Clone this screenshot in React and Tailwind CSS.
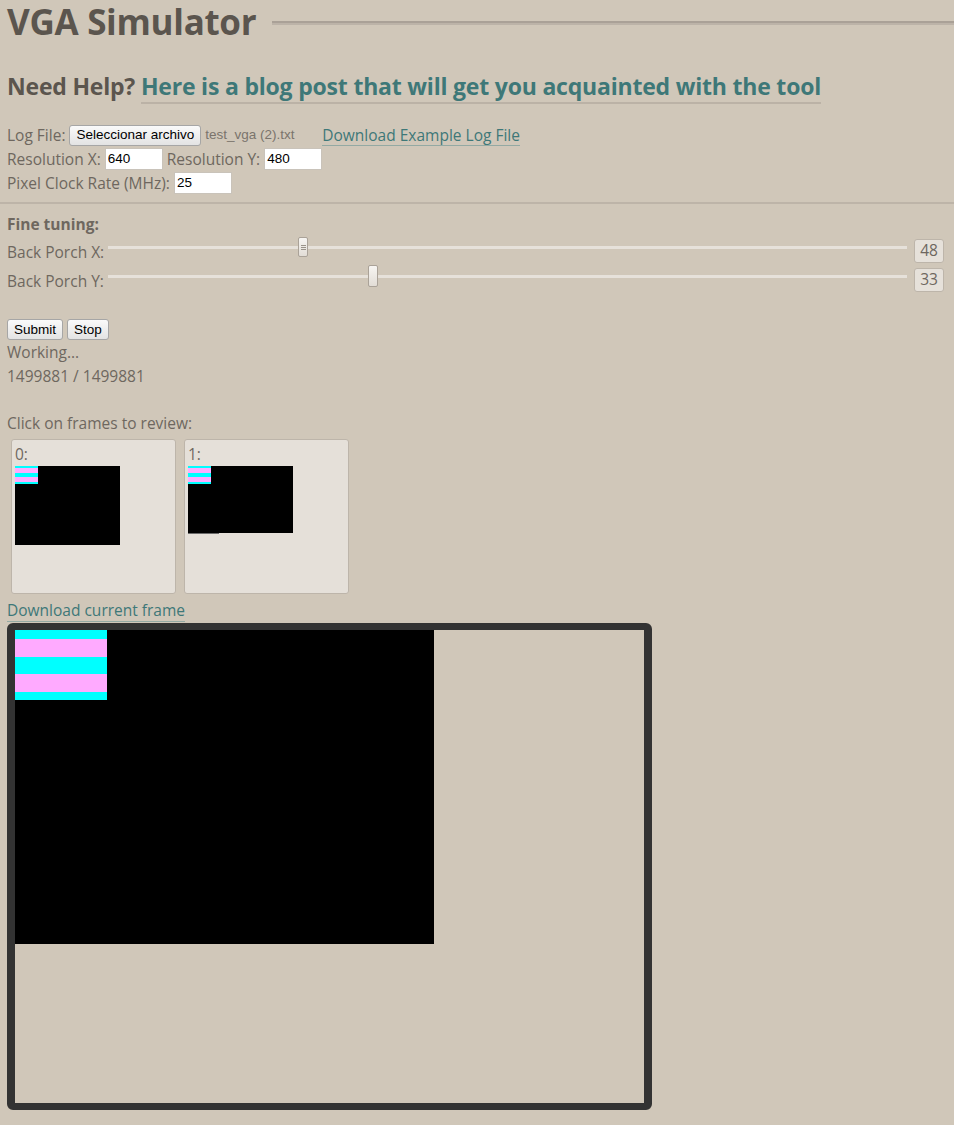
import { useState } from 'react';

const bodyFont = { fontFamily: '"Open Sans", sans-serif' };

const Stripes = ({ big }) => {
    const rows = big ? [9, 18, 17, 18, 8] : [2, 5, 4, 5, 2];
    return (
        <div className={big ? 'w-[92px]' : 'w-[23px]'}>
            {rows.map((h, i) => (
                <div
                    key={i}
                    className={i % 2 === 0 ? 'bg-[#00ffff]' : 'bg-[#ffaaff]'}
                    style={{ height: h }}
                />
            ))}
        </div>
    );
};

const NativeButton = ({ children, className = '' }) => (
    <button
        className={`h-[21px] px-[6px] border border-[#a6a6a6] rounded-[3px] bg-gradient-to-b from-[#fafafa] to-[#e3e3e3] text-[13.5px] text-black leading-none font-['Liberation_Sans',Arial,sans-serif] ${className}`}
    >
        {children}
    </button>
);

const TextInput = ({ value, className = '' }) => (
    <input
        type="text"
        defaultValue={value}
        className={`h-[22px] w-[58px] bg-white border border-[#c9c3ba] px-[2px] text-[13.5px] text-black font-['Liberation_Sans',Arial,sans-serif] outline-none ${className}`}
    />
);

const Slider = ({ label, left, value, grip }) => (
    <div className="flex items-center h-[29px]">
        <span className="w-[101px] shrink-0 pt-[4px]">{label}</span>
        <div className="relative flex-1 h-[3px] bg-[#e6e1da] -mt-[6px]">
            <div
                className={`absolute w-[10px] border border-[#aaa298] rounded-[2px] bg-gradient-to-b from-[#f7f5f2] to-[#e2ddd6] flex flex-col items-center justify-center gap-[1px] ${grip ? 'h-[20px] -top-[9px]' : 'h-[22px] -top-[10px]'}`}
                style={{ left }}
            >
                {grip && (
                    <>
                        <div className="w-[5px] h-px bg-[#9a938a]" />
                        <div className="w-[5px] h-px bg-[#9a938a]" />
                        <div className="w-[5px] h-px bg-[#9a938a]" />
                    </>
                )}
            </div>
        </div>
        <div className="ml-[7px] w-[30px] h-[24px] flex items-center justify-center bg-[#e6e1da] border border-[#bdb5aa] rounded-[3px] text-[15.5px]">
            {value}
        </div>
    </div>
);

const FrameThumb = ({ label, tall }) => (
    <div className="w-[165px] h-[155px] bg-[#e5e0d9] border border-[#bdb5aa] rounded-[3px] px-[3px] pt-[2px] cursor-pointer">
        <div className="leading-[24px]">{label}</div>
        <div className={`w-[105px] bg-black ${tall ? 'h-[79px]' : 'h-[67px]'}`}>
            <Stripes />
        </div>
        {!tall && <div className="w-[31px] h-px bg-[#6a6a6a]" />}
    </div>
);

export default function App() {
    const [frame, setFrame] = useState(0);

    return (
        <div className="min-h-[1125px] bg-[#d0c7b9] text-[#6e675f] px-[7px] text-[15.5px]" style={bodyFont}>
            <div className="flex items-center h-[44px]">
                <h1 className="text-[35px] font-bold text-[#5b554e] leading-[44px] tracking-[-0.3px]">VGA Simulator</h1>
                <div className="flex-1 ml-[16px] -mr-[7px] h-[4px] border-t-2 border-b-2 border-t-[#aaa197] border-b-[#bcb3a8] mt-[2px]" />
            </div>

            <h2 className="mt-[27px] text-[23px] font-bold text-[#5b554e] leading-[30px] tracking-[-0.2px]">
                Need Help?{' '}
                <a href="#" className="text-[#3e7878] border-b-2 border-[#bbb2a6]">
                    Here is a blog post that will get you acquainted with the tool
                </a>
            </h2>

            <div className="mt-[22px] leading-[24px]">
                <div className="flex items-center h-[24px]">
                    <span>Log File:</span>
                    <NativeButton className="ml-[4px]">Seleccionar archivo</NativeButton>
                    <span className="ml-[4px] text-[13.5px] text-[#7a746c] font-['Liberation_Sans',Arial,sans-serif] w-[114px]">
                        test_vga (2).txt
                    </span>
                    <a href="#" className="ml-[3px] text-[#3e7878] border-b border-[#93a9a3] leading-[20px]">
                        Download Example Log File
                    </a>
                </div>
                <div className="flex items-center h-[24px]">
                    <span>Resolution X:</span>
                    <TextInput value="640" className="ml-[4px]" />
                    <span className="ml-[4px]">Resolution Y:</span>
                    <TextInput value="480" className="ml-[4px]" />
                </div>
                <div className="flex items-center h-[24px]">
                    <span>Pixel Clock Rate (MHz):</span>
                    <TextInput value="25" className="ml-[4px]" />
                </div>
            </div>

            <div className="mt-[7px] -mx-[7px] h-[2px] bg-[#bdb4a8]" />

            <div className="mt-[8px] font-bold leading-[24px]">Fine tuning:</div>
            <div className="pr-[3px]">
                <Slider label="Back Porch X:" left="190px" value="48" grip />
                <Slider label="Back Porch Y:" left="260px" value="33" />
            </div>

            <div className="mt-[25px] flex gap-[4px]">
                <NativeButton>Submit</NativeButton>
                <NativeButton>Stop</NativeButton>
            </div>
            <div className="leading-[24px]">Working...</div>
            <div className="leading-[24px]">1499881 / 1499881</div>

            <div className="mt-[23px] leading-[24px]">Click on frames to review:</div>
            <div className="flex gap-[8px] ml-[4px] mt-[4px]">
                <div onClick={() => setFrame(0)}>
                    <FrameThumb label="0:" tall />
                </div>
                <div onClick={() => setFrame(1)}>
                    <FrameThumb label="1:" />
                </div>
            </div>

            <div className="mt-[4px] leading-[24px]">
                <a href="#" className="text-[#3e7878] border-b border-[#93a9a3]">
                    Download current frame
                </a>
            </div>

            <div className="mt-px w-[645px] h-[487px] border-x-8 border-y-[7px] border-[#333333] rounded-[6px] bg-[#d0c7b9]" data-frame={frame}>
                <div className="w-[419px] h-[314px] bg-black">
                    <Stripes big />
                </div>
            </div>
        </div>
    );
}
